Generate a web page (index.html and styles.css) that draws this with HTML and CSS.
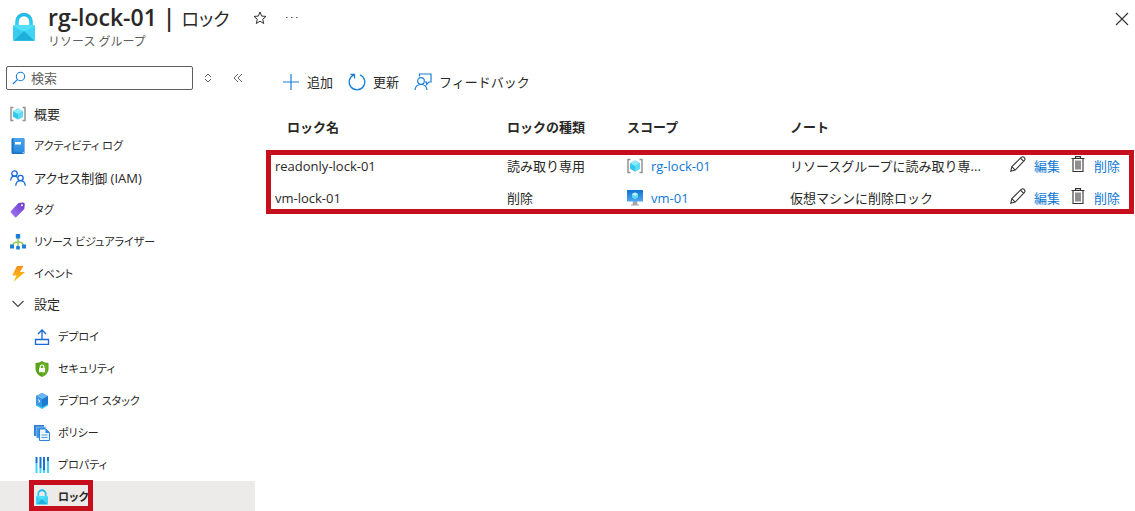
FILE: index.html
```html
<!DOCTYPE html>
<html lang="ja">
<head>
    <meta charset="UTF-8">
    <meta name="viewport" content="width=device-width, initial-scale=1.0">
    <title>rg-lock-01 | ロック</title>
    <link rel="stylesheet" href="styles.css">
</head>
<body>
    <svg class="symbols" aria-hidden="true">
        <defs>
            <linearGradient id="lock-top" x1="0" y1="0" x2="0" y2="1">
                <stop offset="0" stop-color="#22b9e6"/>
                <stop offset="1" stop-color="#32d4f5"/>
            </linearGradient>
            <linearGradient id="blue" x1="0" y1="0" x2="0" y2="1">
                <stop offset="0" stop-color="#0f72d2"/>
                <stop offset="1" stop-color="#52a8f0"/>
            </linearGradient>
            <linearGradient id="book" x1="0" y1="0" x2="0" y2="1">
                <stop offset="0" stop-color="#4aa7ec"/>
                <stop offset="1" stop-color="#2a8ade"/>
            </linearGradient>
            <linearGradient id="bolt" x1="0" y1="0" x2="0" y2="1">
                <stop offset="0" stop-color="#f78d1e"/>
                <stop offset="1" stop-color="#fecc11"/>
            </linearGradient>
            <linearGradient id="purple" x1="0" y1="1" x2="1" y2="0">
                <stop offset="0" stop-color="#a67af4"/>
                <stop offset="1" stop-color="#6a38c8"/>
            </linearGradient>
            <symbol id="icon-lock" viewBox="0 0 24 30">
                <path d="M5 14V9.500a7 7 0 0 1 14 0V14" fill="none" stroke="url(#lock-top)" stroke-width="3.600"/>
                <rect x="1" y="13" width="22" height="16" rx="1" fill="#50dff8"/>
                <path d="M1 14v14l11-8z" fill="#3bcdf0"/>
                <path d="M23 14v14l-11-8z" fill="#3fd3f6"/>
                <path d="M1.500 28.800L12 19l10.500 9.800z" fill="#1fb0d8"/>
            </symbol>
            <symbol id="icon-group" viewBox="0 0 16 16">
                <path d="M3.500 1.500H1v13h2.500M12.500 1.500H15v13h-2.500" fill="none" stroke="#949494" stroke-width="1.500"/>
                <path d="M8 2.500l5 2.700v5.600L8 13.500l-5-2.700V5.200z" fill="#32c8ec"/>
                <path d="M8 2.500l5 2.700L8 8 3 5.200z" fill="#8eeafa"/>
                <path d="M8 8l5-2.800v5.600l-5 2.700z" fill="#5bdcf5"/>
            </symbol>
            <symbol id="icon-book" viewBox="0 0 16 16">
                <path d="M3 0h10.500q1 0 1 1v14q0 1-1 1H3q-1.500 0-1.500-1.500v-13Q1.500 0 3 0z" fill="#1a6fc0"/>
                <path d="M3.500 0h10.500v14.500H3.500z" fill="url(#book)"/>
                <path d="M12.500 14.300h1.500v1h-1.500z" fill="#d6ebfa"/>
                <rect x="5" y="4" width="6" height="2.500" fill="#fff"/>
            </symbol>
            <symbol id="icon-people" viewBox="0 0 16 16">
                <g fill="none" stroke="#1568d8" stroke-width="1.300">
                    <circle cx="4.500" cy="3.500" r="2.700"/>
                    <path d="M.7 10.500q.3-4.300 3.800-4.300 2 0 2.800 1.300"/>
                    <circle cx="10.500" cy="8" r="2.700"/>
                    <path d="M5.700 15.700q.5-5 4.800-5t4.800 5"/>
                </g>
            </symbol>
            <symbol id="icon-tag" viewBox="0 0 16 16">
                <path d="M8.500 1l4.500-.5q1.500 0 1.800 1.500l-.5 5L6.500 15q-.8.800-1.600 0L.8 10.500q-.6-.8.200-1.600z" fill="url(#purple)"/>
                <circle cx="12" cy="3.200" r="1" fill="#fff"/>
            </symbol>
            <symbol id="icon-tree" viewBox="0 0 16 16">
                <path d="M8 4v8M2.500 11.500q1-3.700 5.500-3.700t5.500 3.700" fill="none" stroke="#86c440" stroke-width="1.300"/>
                <path d="M5.800 0h4.400v4.400H5.800zM0 10.500h4v4H0zM12 10.500h4v4h-4zM6.200 12h3.600v3.600H6.200z" fill="#1a7fd8"/>
            </symbol>
            <symbol id="icon-bolt" viewBox="0 0 16 16">
                <path d="M7 0h6.500L10 6h5L3.500 16l3-6.500H2.200z" fill="url(#bolt)"/>
            </symbol>
            <symbol id="icon-chevron" viewBox="0 0 16 16">
                <path d="M2.500 5L8 10.500 13.500 5" fill="none" stroke="#444" stroke-width="1.100"/>
            </symbol>
            <symbol id="icon-upload" viewBox="0 0 16 16">
                <path d="M8 10V1.500M4 5l4-4 4 4M1.500 10.500h13v5h-13z" fill="none" stroke="#1568d8" stroke-width="1.300"/>
            </symbol>
            <symbol id="icon-shield" viewBox="0 0 16 16">
                <path d="M8 0q2.500 2 6.500 2v6q0 5-6.500 8-6.500-3-6.500-8V2Q5.500 2 8 0z" fill="#5ba31c"/>
                <path d="M8 1.200q2 1.600 5.300 1.700V8q0 4-5.300 6.800z" fill="#6db026"/>
                <path d="M6.200 8V5.800a1.800 1.800 0 0 1 3.600 0V8" fill="none" stroke="#fff" stroke-width="1.200"/>
                <rect x="5" y="7" width="6" height="4.200" fill="#fff"/>
            </symbol>
            <symbol id="icon-stack" viewBox="0 0 16 16">
                <path d="M2 9l6 3.500L14 9v3.500L8 16l-6-3.500z" fill="#32c8ec"/>
                <path d="M8 0l6 3v8l-6 3.200L2 11V3z" fill="#1c78d0"/>
                <path d="M8 0l6 3-6 3.200L2 3z" fill="#6ab6f2"/>
                <path d="M2 3l6 3.200v8L2 11z" fill="#3a97e6"/>
                <path d="M4 6.500l2 1.800-1.500 1" fill="none" stroke="#fff"/>
            </symbol>
            <symbol id="icon-policy" viewBox="0 0 16 16">
                <path d="M0 0h10v11H0z" fill="#2a7fd6"/>
                <path d="M2.300 2h9.500v11H2.300z" fill="#3f93e4" stroke="#b9dcfa" stroke-width=".6"/>
                <path d="M5.500 4h6.500l3.500 3.500V15.500h-10z" fill="#edf6fe" stroke="#2a84dc"/>
                <path d="M11.500 4v4h4z" fill="#2a84dc"/>
                <path d="M7.500 10h6M7.500 12.500h6" stroke="#4b9eea"/>
            </symbol>
            <symbol id="icon-bars" viewBox="0 0 16 16">
                <path d="M2.500 0v6M6.500 0v11M10 0v13M14 0v4" stroke="#1a72cc" stroke-width="2"/>
                <path d="M2.500 6v10M6.500 11v5M10 13v3M14 4v12" stroke="#3fd3f6" stroke-width="2"/>
            </symbol>
            <symbol id="icon-vm" viewBox="0 0 16 16">
                <path d="M6 11h4l.5 3.500h1.500v1H4v-1h1.500z" fill="#a5a5a5"/>
                <rect y="0" width="16" height="11.500" rx=".5" fill="url(#blue)"/>
                <path d="M8 2.500l3 1.600v3.400L8 9.200 5 7.500V4.100z" fill="#5bdcf5"/>
                <path d="M8 2.500l3 1.600-3 1.700-3-1.700z" fill="#c3f4fd"/>
            </symbol>
            <symbol id="icon-pencil" viewBox="0 0 16 16">
                <path d="M.8 15.200l1-4.500L11.500 1.200q1.500-1 2.800.4 1.300 1.400.2 2.800L5.200 14.100zM1.800 10.700l3.400 3.400M10.500 2.200l3.200 3.200" fill="none" stroke="#333" stroke-width="1.100"/>
            </symbol>
            <symbol id="icon-trash" viewBox="0 0 16 16">
                <path d="M5.500 2.500V.6h5v1.900M1.500 2.500h13M3 2.500v13h10v-13" fill="none" stroke="#333" stroke-width="1.100"/>
                <path d="M5 4.500h6v9H5z" fill="#8f8f8f"/>
            </symbol>
        </defs>
    </svg>

    <div class="blade">
        <header class="blade-header">
            <svg class="blade-icon"><use href="#icon-lock"/></svg>
            <div class="blade-heading">
                <div class="title-row">
                    <h1>rg-lock-01 | <span class="title-page">ロック</span></h1>
                    <button class="icon-button star" aria-label="お気に入り">
                        <svg viewBox="0 0 14 14"><path d="M7 1l1.700 4.100 4.300.3-3.300 2.800 1 4.300L7 10.200l-3.700 2.300 1-4.300L1 5.400l4.300-.3z" fill="none" stroke="#333"/></svg>
                    </button>
                    <button class="icon-button" aria-label="その他">
                        <svg viewBox="0 0 14 14"><path d="M1 6.500h1.500M6 6.500h1.500M11 6.500h1.500" stroke="#555" stroke-width="1.200"/></svg>
                    </button>
                </div>
                <p class="subtitle">リソース グループ</p>
            </div>
            <button class="icon-button close" aria-label="閉じる">
                <svg viewBox="0 0 14 14"><path d="M1 1l12 12M13 1L1 13" stroke="#333" stroke-width="1.100"/></svg>
            </button>
        </header>

        <div class="blade-body">
            <nav class="sidebar">
                <div class="search-row">
                    <label class="search-box">
                        <svg viewBox="0 0 14 14"><path d="M5.300 8.700L1 13" stroke="#1a7fd8" stroke-width="1.200"/><circle cx="8.500" cy="5.500" r="4.200" fill="none" stroke="#1a7fd8" stroke-width="1.100"/></svg>
                        <input type="text" placeholder="検索" aria-label="検索">
                    </label>
                    <button class="icon-button small" aria-label="展開">
                        <svg viewBox="0 0 12 12"><path d="M3 5l3-3 3 3M3 7l3 3 3-3" fill="none" stroke="#666"/></svg>
                    </button>
                    <button class="icon-button small" aria-label="折りたたむ">
                        <svg viewBox="0 0 12 12"><path d="M6 2L2 6l4 4M10 2L6 6l4 4" fill="none" stroke="#666"/></svg>
                    </button>
                </div>
                <ul class="menu">
                    <li><a href="#"><svg><use href="#icon-group"/></svg>概要</a></li>
                    <li><a href="#" class="kana"><svg><use href="#icon-book"/></svg>アクティビティ ログ</a></li>
                    <li><a href="#"><svg><use href="#icon-people"/></svg>アクセス制御 (IAM)</a></li>
                    <li><a href="#" class="kana"><svg><use href="#icon-tag"/></svg>タグ</a></li>
                    <li><a href="#" class="kana"><svg><use href="#icon-tree"/></svg>リソース ビジュアライザー</a></li>
                    <li><a href="#" class="kana"><svg><use href="#icon-bolt"/></svg>イベント</a></li>
                    <li>
                        <button class="menu-group" aria-expanded="true"><svg><use href="#icon-chevron"/></svg>設定</button>
                        <ul class="submenu">
                            <li><a href="#" class="kana"><svg><use href="#icon-upload"/></svg>デプロイ</a></li>
                            <li><a href="#" class="kana"><svg><use href="#icon-shield"/></svg>セキュリティ</a></li>
                            <li><a href="#" class="kana"><svg><use href="#icon-stack"/></svg>デプロイ スタック</a></li>
                            <li><a href="#" class="kana"><svg><use href="#icon-policy"/></svg>ポリシー</a></li>
                            <li><a href="#" class="kana"><svg><use href="#icon-bars"/></svg>プロパティ</a></li>
                            <li><a href="#" class="kana selected"><svg><use href="#icon-lock"/></svg>ロック</a></li>
                        </ul>
                    </li>
                </ul>
            </nav>

            <main class="content">
                <div class="toolbar">
                    <button>
                        <svg viewBox="0 0 18 18"><path d="M9 1v16M1 9h16" stroke="#1a7fd8" stroke-width="1.200"/></svg>
                        追加
                    </button>
                    <button>
                        <svg viewBox="0 0 18 18"><path d="M12 1.800A7.800 7.800 0 1 1 6 1.800M2.500 1.500H6.500v4" fill="none" stroke="#1a7fd8" stroke-width="1.300"/></svg>
                        更新
                    </button>
                    <button>
                        <svg viewBox="0 0 18 18"><path d="M5.500 3.500V1h11.500v8H15l-2.500 2.500V9h-1.500M1 17q.5-5.500 6-5.500t6 5.500" fill="none" stroke="#1a7fd8" stroke-width="1.200"/><circle cx="7" cy="8" r="3.300" fill="none" stroke="#1a7fd8" stroke-width="1.200"/></svg>
                        フィードバック
                    </button>
                </div>

                <div class="lock-list">
                    <table>
                        <thead>
                            <tr>
                                <th class="col-name" scope="col">ロック名</th>
                                <th class="col-type" scope="col">ロックの種類</th>
                                <th class="col-scope" scope="col">スコープ</th>
                                <th scope="col">ノート</th>
                                <th class="col-actions" aria-label="操作"></th>
                            </tr>
                        </thead>
                        <tbody>
                            <tr>
                                <td>readonly-lock-01</td>
                                <td>読み取り専用</td>
                                <td><a href="#" class="scope"><svg><use href="#icon-group"/></svg>rg-lock-01</a></td>
                                <td>リソースグループに読み取り専...</td>
                                <td>
                                    <div class="actions">
                                        <a href="#"><svg><use href="#icon-pencil"/></svg>編集</a>
                                        <a href="#"><svg><use href="#icon-trash"/></svg>削除</a>
                                    </div>
                                </td>
                            </tr>
                            <tr>
                                <td>vm-lock-01</td>
                                <td>削除</td>
                                <td><a href="#" class="scope"><svg><use href="#icon-vm"/></svg>vm-01</a></td>
                                <td>仮想マシンに削除ロック</td>
                                <td>
                                    <div class="actions">
                                        <a href="#"><svg><use href="#icon-pencil"/></svg>編集</a>
                                        <a href="#"><svg><use href="#icon-trash"/></svg>削除</a>
                                    </div>
                                </td>
                            </tr>
                        </tbody>
                    </table>
                </div>
            </main>
        </div>
    </div>
</body>
</html>
```
FILE: styles.css
```css
*,
*::after {
    box-sizing: border-box;
}

body {
    margin: 0;
    background: #fff;
    font-family: "Open Sans", "Noto Sans CJK JP", sans-serif;
    font-size: 13px;
    line-height: 20px;
    color: #292827;
}

a {
    color: #0f78d4;
    text-decoration: none;
}

button {
    padding: 0;
    border: none;
    background: none;
    font: inherit;
    color: inherit;
    cursor: pointer;
}

svg {
    display: block;
    flex: none;
    width: 16px;
    height: 16px;
}

.symbols {
    position: absolute;
    width: 0;
    height: 0;
}

.blade {
    display: flex;
    flex-direction: column;
    height: 100vh;
    overflow: hidden;
}

/* header */
.blade-header {
    display: flex;
    align-items: flex-start;
    flex: none;
    height: 66px;
    padding: 4px 6px 0 12px;
}

.blade-icon {
    width: 24px;
    height: 30px;
    margin-top: 8px;
}

.blade-heading {
    flex: 1;
    margin-left: 12px;
}

.title-row {
    display: flex;
    align-items: center;
    height: 28px;
}

.title-row h1 {
    margin: 0 24px 0 0;
    font-size: 23px;
    font-weight: 600;
    line-height: 28px;
}

.title-page {
    font-size: 18px;
    font-weight: 400;
    font-feature-settings: "palt";
}

.subtitle {
    margin: 0;
    font-size: 12px;
    color: #605e5c;
}

.icon-button svg {
    width: 14px;
    height: 14px;
}

.icon-button.star {
    margin-right: 18px;
}

.icon-button.small svg {
    width: 12px;
    height: 12px;
}

.close {
    margin-top: 8px;
}

/* side menu */
.blade-body {
    display: flex;
    flex: 1;
    min-height: 0;
}

.sidebar {
    flex: none;
    width: 255px;
    font-feature-settings: "palt";
}

.search-row {
    display: flex;
    align-items: center;
    padding-left: 6px;
}

.search-row .small {
    display: flex;
    justify-content: center;
    width: 30px;
}

.search-box {
    display: flex;
    align-items: center;
    gap: 5px;
    width: 187px;
    height: 24px;
    padding: 0 5px;
    border: 1px solid #605e5c;
    border-radius: 2px;
}

.search-box svg {
    width: 14px;
    height: 14px;
}

.search-box input {
    width: 100%;
    padding: 0;
    border: none;
    outline: none;
    background: none;
    font: inherit;
}

.search-box input::placeholder {
    color: #605e5c;
}

.menu,
.submenu {
    margin: 0;
    padding: 0;
    list-style: none;
}

.menu {
    margin-top: 8px;
}

.menu a,
.menu-group {
    display: flex;
    align-items: center;
    gap: 8px;
    width: 100%;
    height: 32px;
    padding-left: 10px;
    color: #292827;
}

.menu .kana {
    font-size: 11px;
}

.menu-group {
    height: 28px;
    margin-bottom: 3px;
}

.submenu a {
    position: relative;
    padding-left: 34px;
}

.submenu .selected {
    background: #edebe9;
    font-weight: 600;
}

.submenu .selected::after {
    content: "";
    position: absolute;
    top: -1px;
    left: 29px;
    width: 64px;
    height: 31px;
    border: 5px solid #c50f1c;
}

/* content */
.content {
    flex: 1;
    min-width: 0;
    padding-left: 20px;
}

.toolbar {
    display: flex;
    gap: 15px;
    height: 32px;
    padding-left: 7px;
}

.toolbar button {
    display: flex;
    align-items: center;
    gap: 7px;
}

.toolbar svg {
    width: 18px;
    height: 18px;
}

.lock-list {
    position: relative;
    margin-top: 8px;
}

/* frame around the lock rows */
.lock-list::after {
    content: "";
    position: absolute;
    top: 44px;
    right: 1px;
    bottom: 0;
    left: -9px;
    border: 5px solid #c50f1c;
    pointer-events: none;
}

table {
    width: 100%;
    table-layout: fixed;
    border-collapse: collapse;
}

th,
td {
    padding: 0;
    text-align: left;
    white-space: nowrap;
}

th {
    height: 44px;
    padding-bottom: 2px;
    border-bottom: 1px solid #e1dfdd;
    font-weight: 600;
}

td {
    height: 32px;
}

.col-name {
    width: 232px;
    padding-left: 12px;
}

.col-type {
    width: 120px;
}

.col-scope {
    width: 163px;
}

.col-actions {
    width: 125px;
}

.scope {
    display: flex;
    align-items: center;
    gap: 8px;
}

.actions {
    display: flex;
    gap: 10px;
}

.actions a {
    display: flex;
    align-items: center;
    gap: 8px;
}

.actions svg {
    margin-bottom: 4px;
}
```
